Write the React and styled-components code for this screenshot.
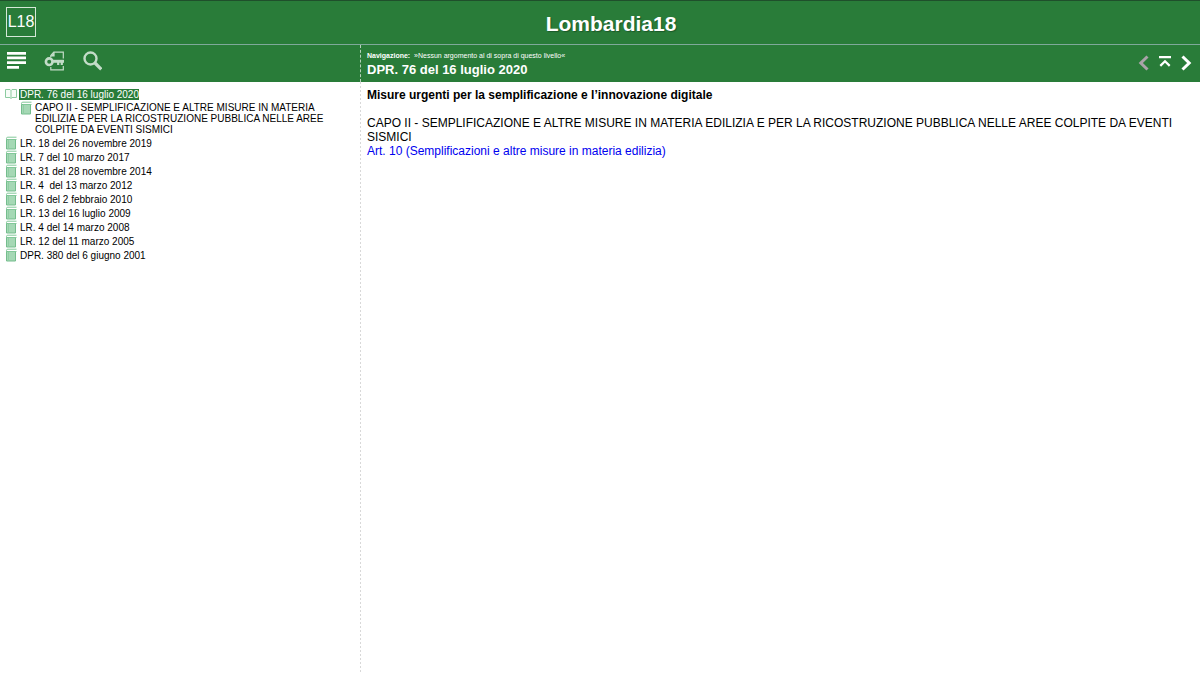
import React from 'react';
import styled, { createGlobalStyle } from 'styled-components';

const GlobalStyle = createGlobalStyle`
  * {
    box-sizing: border-box;
  }

  body {
    margin: 0;
    background: #fff;
    color: #000;
    font-family: "Liberation Sans", Arial, sans-serif;
  }
`;

const Page = styled.div`
  display: flex;
  flex-direction: column;
  min-height: 100vh;
`;

const Header = styled.header`
  display: flex;
  align-items: center;
  height: 45px;
  padding: 0 14px 2px 6px;
  background: #297c39;
  border-top: 1px solid #1f4f2b;
  border-bottom: 1px solid #7fa99a;
`;

const Logo = styled.a`
  display: flex;
  align-items: center;
  justify-content: center;
  width: 30px;
  height: 30px;
  border: 1px solid #d5e8d8;
  color: #fff;
  font-size: 16px;
  text-decoration: none;
`;

const SiteTitle = styled.h1`
  flex: 1;
  margin: 0;
  padding-top: 4px;
  color: #fff;
  font-size: 21px;
  line-height: 24px;
  text-align: center;
  text-shadow: 1px 1px 1px #1b5928;
`;

const Columns = styled.div`
  display: grid;
  grid-template-columns: 30% 1fr;
  grid-template-rows: 37px 1fr;
  flex: 1;
`;

const Toolbar = styled.div`
  display: flex;
  align-items: center;
  gap: 18px;
  padding: 0 6px 6px;
  background: #297c39;
`;

const IconButton = styled.button`
  display: flex;
  padding: 0;
  border: 0;
  background: none;
  cursor: pointer;
`;

const TopicBar = styled.div`
  display: flex;
  align-items: center;
  justify-content: space-between;
  padding: 2px 8px 0 6px;
  background: #297c39;
  border-left: 1px dashed #b5d0ba;
  color: #fff;
`;

const Breadcrumb = styled.p`
  margin: 0;
  font-size: 7px;
  line-height: 10px;
  white-space: pre;
`;

const TopicTitle = styled.h2`
  margin: 0;
  font-size: 13px;
  line-height: 18px;
`;

const Pager = styled.div`
  display: flex;
  align-items: center;
  gap: 10px;
  padding-bottom: 4px;
`;

const Sidebar = styled.nav`
  padding: 5px 24px 0 5px;
`;

const Tree = styled.ul`
  margin: 0;
  padding: 0;
  list-style: none;
`;

const TreeItem = styled.li`
  display: flex;
  gap: 2px;
  padding-left: ${({ $nested }) => ($nested ? '15px' : '0')};

  svg {
    flex: none;
  }
`;

const TreeLink = styled.a`
  align-self: center;
  padding: ${({ $nested }) => ($nested ? '1px 0 1px 1px' : '0 0 0 1px')};
  background: ${({ $active }) => ($active ? '#297c39' : 'transparent')};
  color: ${({ $active }) => ($active ? '#fff' : '#000')};
  font-size: 10px;
  line-height: 11px;
  text-decoration: none;
  white-space: pre-wrap;
`;

const Content = styled.main`
  padding: 6px 24px 0 7px;
  background: repeating-linear-gradient(#d8d8d8 0 2px, transparent 2px 4px) 0 0 / 1px calc(100% - 3px) no-repeat;
  font-size: 12px;
  line-height: 14px;
`;

const Subject = styled.h3`
  margin: 0 0 14px;
  font-size: 12px;
  line-height: 14px;
`;

const Chapter = styled.p`
  margin: 0;
`;

const ArticleLink = styled.a`
  color: #0000f0;
  text-decoration: none;
`;

const laws = [
  'LR. 18 del 26 novembre 2019',
  'LR. 7 del 10 marzo 2017',
  'LR. 31 del 28 novembre 2014',
  'LR. 4  del 13 marzo 2012',
  'LR. 6 del 2 febbraio 2010',
  'LR. 13 del 16 luglio 2009',
  'LR. 4 del 14 marzo 2008',
  'LR. 12 del 11 marzo 2005',
  'DPR. 380 del 6 giugno 2001',
];

const chapter =
  'CAPO II - SEMPLIFICAZIONE E ALTRE MISURE IN MATERIA EDILIZIA E PER LA RICOSTRUZIONE PUBBLICA NELLE AREE COLPITE DA EVENTI SISMICI';

const ContentsIcon = () => (
  <svg width="20" height="20" viewBox="0 0 20 20" fill="#fff" aria-hidden="true">
    <path d="M1 1h19v2.700H1zM1 5.600h19v2.700H1zM1 10.300h19v2.700H1zM1 15h12v2.700H1z" />
  </svg>
);

const KeywordsIcon = () => (
  <svg width="20" height="20" viewBox="0 0 20 20" fill="none" stroke="#c3dcc8" aria-hidden="true">
    <path d="M6.800 6V4.500L9.800 1.200H19.300V7.500M6.800 16V18.800H19.300V15" strokeWidth="1.200" />
    <path d="M6.200 5.500L10.600 .8V5.500z" fill="#c3dcc8" stroke="none" />
    <circle cx="5.200" cy="10.700" r="3.300" strokeWidth="2.600" />
    <path d="M8.500 10.300H20" strokeWidth="3" />
    <path d="M14.200 11v3M17.800 11v3" strokeWidth="2.200" />
  </svg>
);

const SearchIcon = () => (
  <svg width="20" height="20" viewBox="0 0 20 20" fill="none" stroke="#c3dcc8" aria-hidden="true">
    <circle cx="8.500" cy="7.500" r="6" strokeWidth="2.400" />
    <path d="M13 12l6.300 6.300" strokeWidth="3.200" />
  </svg>
);

const BookIcon = () => (
  <svg width="12" height="14" viewBox="0 0 12 14" aria-hidden="true">
    <path d="M1.500 3.500h9v9.500h-9z" fill="#a5d8b5" stroke="#74bd8d" />
    <path d="M1.500 4V2.500Q1.500 1.200 2.800 1.200H11.500M2.500 3.500H11.500" fill="none" stroke="#82c899" />
    <path d="M3.500 4v9" stroke="#8fcea3" />
  </svg>
);

const OpenBookIcon = () => (
  <svg width="12" height="14" viewBox="0 0 12 14" fill="#f6fcf7" stroke="#8ccba0" aria-hidden="true">
    <path d="M.5 2.500H5L6 3.500L7 2.500H11.500V10.500H7L6 11.500L5 10.500H.5zM6 3.500v8" />
  </svg>
);

const PreviousIcon = () => (
  <svg width="11" height="16" viewBox="0 0 11 16" fill="none" stroke="#a9a3a9" strokeWidth="3" aria-hidden="true">
    <path d="M9.500 1.500L2.800 8l6.700 6.500" />
  </svg>
);

const TopIcon = () => (
  <svg width="12" height="16" viewBox="0 0 12 16" fill="none" stroke="#fff" strokeWidth="2.200" aria-hidden="true">
    <path d="M0 2.200h12M1.300 10.900L6 6.300l4.700 4.600" />
  </svg>
);

const NextIcon = () => (
  <svg width="11" height="16" viewBox="0 0 11 16" fill="none" stroke="#fff" strokeWidth="3" aria-hidden="true">
    <path d="M1.500 1.500L8.200 8l-6.700 6.500" />
  </svg>
);

const App = () => {
  return (
    <Page>
      <GlobalStyle />
      <Header>
        <Logo href="#">L18</Logo>
        <SiteTitle>Lombardia18</SiteTitle>
      </Header>
      <Columns>
        <Toolbar>
          <IconButton aria-label="Sommario"><ContentsIcon /></IconButton>
          <IconButton aria-label="Parole chiave"><KeywordsIcon /></IconButton>
          <IconButton aria-label="Cerca"><SearchIcon /></IconButton>
        </Toolbar>
        <TopicBar>
          <div>
            <Breadcrumb><b>Navigazione:</b>{'  »Nessun argomento al di sopra di questo livello«'}</Breadcrumb>
            <TopicTitle>DPR. 76 del 16 luglio 2020</TopicTitle>
          </div>
          <Pager>
            <IconButton aria-label="Precedente" disabled><PreviousIcon /></IconButton>
            <IconButton aria-label="Inizio"><TopIcon /></IconButton>
            <IconButton aria-label="Successivo"><NextIcon /></IconButton>
          </Pager>
        </TopicBar>
        <Sidebar>
          <Tree>
            <TreeItem>
              <OpenBookIcon />
              <TreeLink href="#" $active>DPR. 76 del 16 luglio 2020</TreeLink>
            </TreeItem>
            <TreeItem $nested>
              <BookIcon />
              <TreeLink href="#" $nested>{chapter}</TreeLink>
            </TreeItem>
            {laws.map((law) => (
              <TreeItem key={law}>
                <BookIcon />
                <TreeLink href="#">{law}</TreeLink>
              </TreeItem>
            ))}
          </Tree>
        </Sidebar>
        <Content>
          <Subject>Misure urgenti per la semplificazione e l’innovazione digitale</Subject>
          <Chapter>{chapter}</Chapter>
          <ArticleLink href="#">Art. 10 (Semplificazioni e altre misure in materia edilizia)</ArticleLink>
        </Content>
      </Columns>
    </Page>
  );
};

export default App;
